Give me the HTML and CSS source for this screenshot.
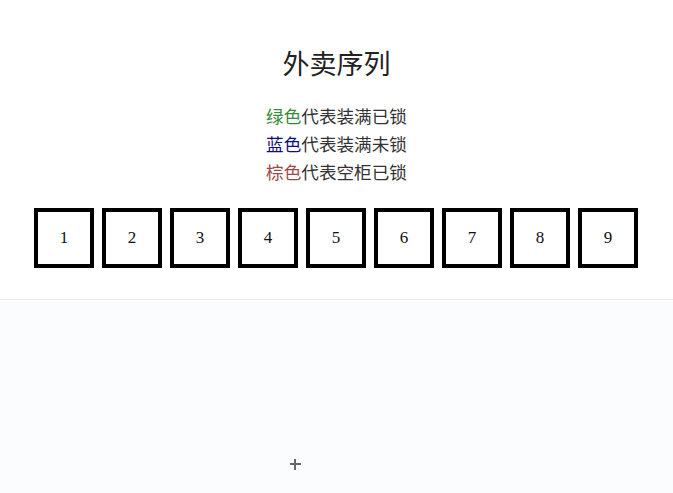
FILE: index.html
```html
<!DOCTYPE html>
<html lang="zh">
<head>
<meta charset="utf-8">
<title>外卖序列</title>
<link rel="stylesheet" href="styles.css">
</head>
<body>
<main class="top">
  <h1 class="title">外卖序列</h1>
  <div class="legend">
    <p><span class="green">绿色</span>代表装满已锁</p>
    <p><span class="blue">蓝色</span>代表装满未锁</p>
    <p><span class="brown">棕色</span>代表空柜已锁</p>
  </div>
  <div class="boxes">
    <div class="box">1</div>
    <div class="box">2</div>
    <div class="box">3</div>
    <div class="box">4</div>
    <div class="box">5</div>
    <div class="box">6</div>
    <div class="box">7</div>
    <div class="box">8</div>
    <div class="box">9</div>
  </div>
</main>
<section class="bottom">
  <span class="cursor"></span>
</section>
</body>
</html>
```

FILE: styles.css
```css
html, body {
  margin: 0;
  padding: 0;
  height: 100%;
}
body {
  background: #fbfcfd;
  font-family: "Noto Sans CJK SC", "Noto Sans", sans-serif;
  color: #333;
}
.top {
  background: #ffffff;
  height: 300px;
  border-bottom: 1px solid #e8eaee;
  display: flex;
  flex-direction: column;
  align-items: center;
  box-sizing: border-box;
  padding-top: 44px;
}
.title {
  margin: 0;
  font-size: 27px;
  font-weight: 400;
  line-height: 38px;
  color: #222;
}
.legend {
  margin-top: 20px;
  text-align: center;
}
.legend p {
  margin: 0;
  font-size: 17.6px;
  line-height: 28px;
  color: #333;
}
.green { color: #3a8a3a; }
.blue { color: #10107a; }
.brown { color: #9a4a4a; }
.boxes {
  display: flex;
  gap: 8px;
  margin-top: 22px;
  margin-right: 1px;
}
.box {
  width: 60px;
  height: 60px;
  box-sizing: border-box;
  border: 4px solid #000;
  display: flex;
  align-items: center;
  justify-content: center;
  font-family: "Liberation Serif", serif;
  font-size: 17px;
  color: #111;
  background: #fff;
}
.bottom {
  position: relative;
  height: 192px;
}
.cursor {
  position: absolute;
  left: 290px;
  top: 159px;
  width: 11px;
  height: 11px;
}
.cursor::before,
.cursor::after {
  content: "";
  position: absolute;
  background: #666;
}
.cursor::before {
  left: 4px;
  top: 0;
  width: 2px;
  height: 11px;
}
.cursor::after {
  top: 4px;
  left: 0;
  width: 11px;
  height: 2px;
}
```
